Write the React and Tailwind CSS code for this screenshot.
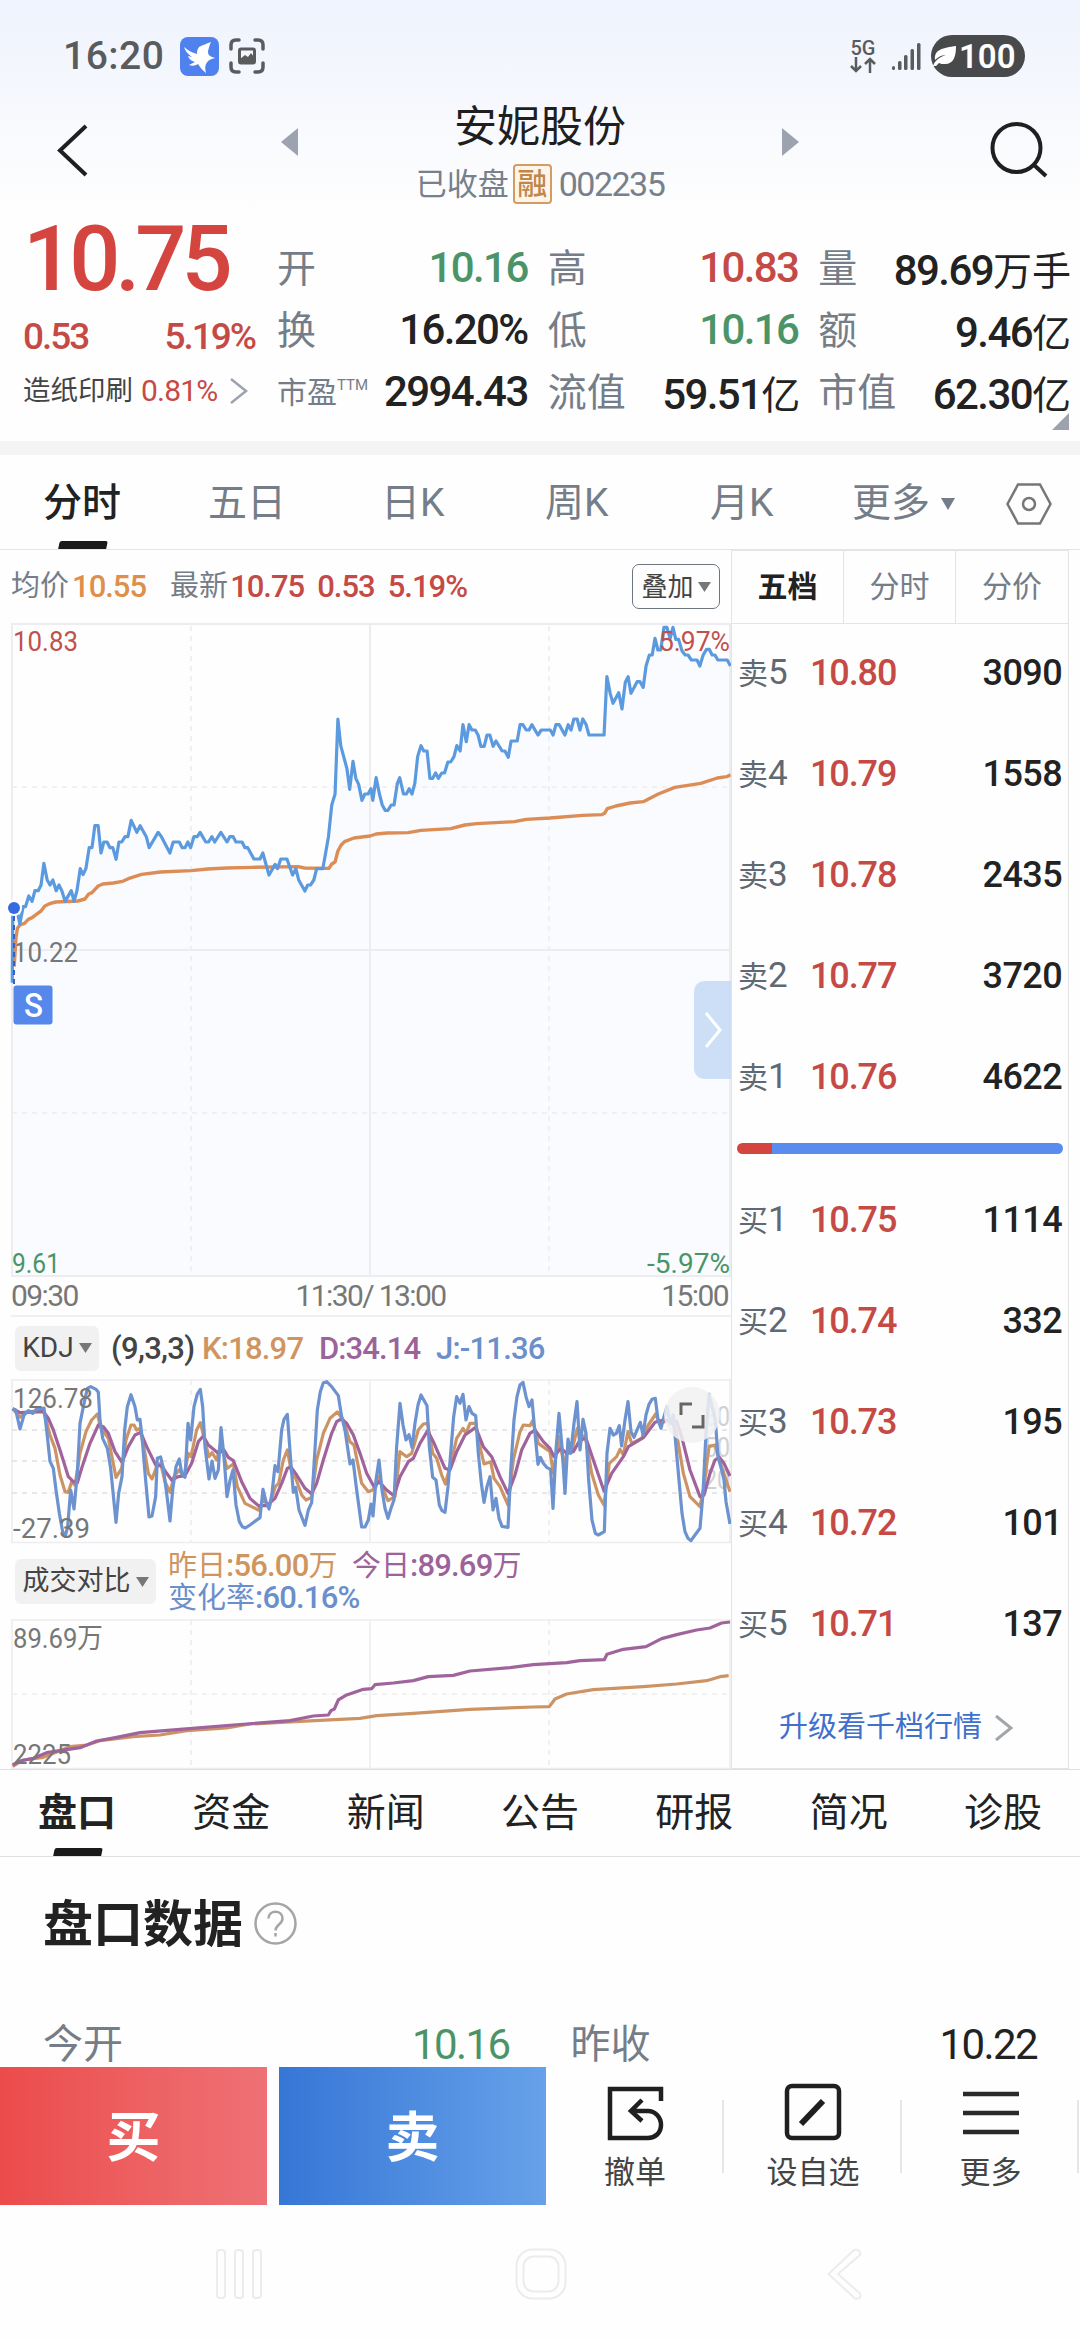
import React from "react";

const RED = "text-[#c54a45]";
const GREEN = "text-[#4b9468]";

const stats = [
  [
    { label: "开", value: "10.16", tone: GREEN },
    { label: "换", value: "16.20%", tone: "text-[#222]" },
    { label: "市盈", sup: "TTM", value: "2994.43", tone: "text-[#222]" },
  ],
  [
    { label: "高", value: "10.83", tone: RED },
    { label: "低", value: "10.16", tone: GREEN },
    { label: "流值", value: "59.51", unit: "亿", tone: "text-[#222]" },
  ],
  [
    { label: "量", value: "89.69", unit: "万手", tone: "text-[#222]" },
    { label: "额", value: "9.46", unit: "亿", tone: "text-[#222]" },
    { label: "市值", value: "62.30", unit: "亿", tone: "text-[#222]" },
  ],
];

const asks = [
  ["5", "10.80", "3090"],
  ["4", "10.79", "1558"],
  ["3", "10.78", "2435"],
  ["2", "10.77", "3720"],
  ["1", "10.76", "4622"],
];
const bids = [
  ["1", "10.75", "1114"],
  ["2", "10.74", "332"],
  ["3", "10.73", "195"],
  ["4", "10.72", "101"],
  ["5", "10.71", "137"],
];

/* Price and average series, in plot units. */
const price =
  "26,1298 27,1080 36,1080 42,1122 49,1070 54,1070 61,1038 68,1054 74,1022 81,1022 87,1005 93,940 100,990 106,1005 112,990 119,1022 125,1005 131,1022 138,1054 151,1022 157,1054 163,1022 170,956 176,974 182,956 189,893 195,893 201,827 208,827 214,909 220,876 227,876 233,893 239,893 246,928 252,876 258,876 265,860 271,860 278,811 290,847 297,827 310,860 316,893 323,876 335,847 342,860 360,909 367,876 380,876 386,893 392,893 398,876 404,893 411,860 418,860 424,847 436,876 442,876 449,860 455,876 468,847 481,876 487,860 494,860 500,876 513,876 519,893 525,893 538,927 551,927 557,909 564,945 570,975 583,943 588,956 595,927 608,927 620,975 627,956 633,990 646,1023 652,1005 658,1005 665,990 671,956 684,956 690,909 696,860 703,765 710,732 716,507 722,587 735,655 741,718 748,634 754,685 760,703 767,751 773,732 780,732 786,716 790,751 797,683 804,732 810,765 816,781 822,781 829,765 835,765 842,700 847,683 855,732 861,732 867,716 873,732 879,700 885,620 892,587 898,603 905,603 911,685 917,685 923,669 929,685 936,669 942,669 949,636 955,636 962,620 968,587 975,603 981,524 988,575 994,524 1000,540 1007,540 1013,555 1019,589 1026,589 1032,555 1038,555 1045,589 1051,573 1064,603 1070,603 1077,622 1083,573 1096,573 1102,524 1108,524 1115,540 1121,540 1127,524 1140,555 1147,540 1166,540 1172,555 1178,524 1185,524 1197,555 1204,524 1210,540 1216,507 1223,507 1229,540 1235,507 1242,524 1248,555 1280,555 1286,380 1293,430 1299,460 1311,428 1318,477 1325,397 1331,380 1337,430 1344,412 1350,395 1356,395 1363,412 1369,348 1376,315 1382,315 1388,265 1394,300 1400,300 1407,232 1413,232 1420,265 1426,232 1432,268 1438,268 1445,302 1452,315 1458,315 1465,330 1477,330 1483,348 1490,315 1497,298 1503,298 1509,315 1515,315 1521,330 1541,330 1548,348";
const average =
  "30,1250 34,1160 37,1135 42,1125 52,1120 60,1108 68,1103 80,1090 87,1083 95,1068 105,1061 118,1056 165,1053 180,1047 188,1032 195,1028 208,1008 218,1002 240,999 260,994 272,986 300,973 340,966 405,962 440,957 480,954 535,952 632,950 645,954 697,955 703,942 710,936 716,903 723,885 730,875 750,864 784,858 797,852 820,849 865,848 892,841 955,836 985,825 1010,821 1090,815 1115,808 1165,804 1235,796 1275,794 1281,790 1287,776 1305,768 1335,759 1363,755 1395,732 1430,712 1485,700 1520,684 1540,680 1548,674";

/* KDJ series, three plot units per pixel. */
const lineJ =
  "38,446 47,450 60,507 72,465 85,452 98,460 108,449 132,444 140,510 150,604 160,625 168,690 178,760 188,815 196,828 203,800 212,690 222,747 232,640 240,490 250,440 262,385 272,380 288,388 295,397 300,480 308,535 322,565 332,625 348,787 356,700 366,650 374,510 382,440 393,404 405,440 412,480 420,478 426,530 436,650 447,771 456,768 467,710 472,595 482,591 490,625 500,700 510,783 518,690 528,620 538,597 545,640 555,652 564,490 572,540 582,440 592,402 601,388 608,440 615,560 627,657 636,603 645,655 655,630 663,503 672,590 681,710 690,662 699,630 708,735 718,785 727,800 736,804 750,795 780,773 789,688 798,725 807,747 816,700 825,617 834,635 845,510 852,478 862,463 872,600 880,697 887,682 897,750 915,796 925,750 935,728 943,600 952,450 961,395 970,368 980,365 995,380 1015,407 1025,470 1035,510 1050,612 1059,600 1070,690 1085,801 1095,801 1105,780 1113,732 1119,768 1128,660 1137,600 1146,690 1155,745 1164,775 1173,745 1182,720 1190,560 1200,430 1209,495 1218,540 1227,524 1236,562 1245,490 1254,435 1263,405 1281,437 1288,560 1298,652 1308,660 1318,735 1326,752 1335,757 1344,680 1352,580 1361,470 1370,410 1380,430 1389,403 1398,480 1407,440 1416,460 1427,467 1435,580 1444,670 1452,727 1461,680 1470,650 1479,750 1488,715 1497,775 1506,799 1524,802 1533,620 1542,480 1551,410 1560,375 1569,367 1578,410 1587,440 1596,420 1605,520 1614,613 1621,592 1630,610 1640,622 1652,628 1659,745 1668,570 1677,460 1686,560 1695,700 1704,537 1712,580 1722,490 1731,425 1740,570 1749,478 1758,520 1766,660 1776,780 1786,820 1795,825 1813,815 1821,580 1830,505 1840,525 1849,520 1858,497 1865,558 1875,480 1884,425 1893,515 1902,532 1912,508 1921,487 1929,525 1938,465 1947,433 1956,418 1966,415 1974,480 1983,505 1992,470 2001,440 2010,490 2020,465 2028,560 2037,660 2046,760 2055,815 2064,835 2073,842 2085,825 2100,805 2109,700 2118,520 2127,403 2136,440 2146,480 2154,590 2165,630 2172,660 2178,725 2190,792";
const lineD =
  "38,446 60,458 130,455 145,475 160,510 180,570 205,650 220,665 232,668 245,625 270,550 295,495 310,500 325,520 345,575 366,607 385,560 405,525 422,517 440,560 468,617 485,617 500,640 515,660 535,650 555,647 575,610 595,545 610,528 625,555 655,580 672,570 685,592 700,602 725,665 750,715 775,737 800,737 825,715 845,670 862,625 872,620 890,645 915,685 935,702 950,670 970,600 995,520 1010,485 1024,477 1040,490 1060,525 1080,580 1100,640 1122,680 1137,665 1160,690 1182,707 1200,650 1225,605 1240,595 1260,550 1283,512 1300,545 1335,625 1350,630 1370,575 1395,525 1427,502 1450,560 1475,590 1500,650 1524,700 1545,645 1565,570 1590,520 1605,510 1630,545 1650,565 1662,590 1682,565 1700,580 1720,575 1740,540 1758,535 1780,600 1812,693 1835,640 1870,590 1885,560 1930,533 1965,487 1990,480 2030,485 2045,530 2070,630 2100,710 2112,705 2130,640 2145,600 2158,592 2172,610 2190,648";
const lineK =
  "38,446 60,472 75,458 130,450 150,525 165,565 180,645 195,695 205,697 215,665 225,675 240,580 258,515 275,480 292,462 303,505 325,535 348,652 365,625 378,540 393,495 402,495 410,510 420,505 435,580 445,640 456,657 470,620 482,610 495,665 510,697 522,650 537,630 552,650 565,580 573,590 590,510 601,488 615,545 627,590 636,578 650,600 663,550 681,625 700,612 712,680 735,730 775,750 790,720 808,740 826,680 836,670 850,600 862,570 875,640 887,655 905,705 918,720 935,712 950,600 970,520 990,475 1012,456 1030,480 1050,545 1062,555 1085,670 1105,695 1118,690 1128,680 1137,650 1150,690 1164,722 1185,710 1200,575 1220,590 1235,580 1255,510 1270,492 1283,490 1298,580 1310,595 1325,645 1336,672 1350,620 1370,535 1389,505 1398,520 1410,490 1427,490 1440,560 1452,612 1472,605 1482,655 1500,680 1524,735 1540,600 1560,515 1570,495 1590,497 1598,482 1615,550 1650,575 1660,640 1677,530 1692,615 1705,560 1715,575 1732,505 1742,545 1755,525 1775,640 1795,705 1812,735 1828,610 1850,590 1860,568 1870,585 1884,515 1895,550 1925,535 1945,495 1967,462 1980,490 2010,480 2028,510 2050,640 2070,710 2100,740 2112,680 2127,560 2145,555 2165,620 2190,695";
const today =
  "38,1515 60,1503 100,1495 140,1478 240,1463 290,1443 350,1432 420,1418 540,1408 700,1395 870,1382 940,1368 985,1365 993,1352 1003,1347 1015,1320 1040,1305 1090,1288 1115,1286 1125,1274 1180,1269 1240,1262 1285,1250 1360,1246 1410,1233 1530,1223 1600,1214 1700,1208 1740,1202 1813,1199 1821,1183 1870,1168 1938,1160 1985,1136 2030,1124 2090,1110 2130,1104 2165,1089 2190,1086";
const yesterday =
  "38,1519 70,1500 130,1492 210,1460 260,1455 300,1442 400,1430 480,1425 560,1412 680,1404 750,1392 900,1384 1080,1375 1130,1367 1240,1360 1410,1348 1600,1341 1648,1340 1665,1317 1700,1302 1780,1289 1930,1280 2030,1272 2120,1262 2160,1250 2186,1247";

function Line({ points, color, width = 3.2 }) {
  return (
    <polyline
      points={points}
      fill="none"
      stroke={color}
      strokeWidth={width}
      strokeLinejoin="round"
      vectorEffect="non-scaling-stroke"
    />
  );
}

function Label({ x, y, w, fill = "#777", end, children }) {
  return (
    <text x={x} y={y} fill={fill} fontSize="28.5" textAnchor={end ? "end" : "start"} textLength={w} lengthAdjust="spacingAndGlyphs">
      {children}
    </text>
  );
}

function Caret({ className = "" }) {
  return (
    <svg className={className} width="13" height="10" viewBox="0 0 13 10">
      <path d="M0 0h13L6.500 10z" fill="#777" />
    </svg>
  );
}

function StatusBar() {
  return (
    <div className="flex h-[90px] items-center pl-[63px] pr-[55px] pt-[22px] text-[#5a5b5d]">
      <span className="w-[117px] text-[39px] font-medium leading-none tracking-[0.5px]">16:20</span>
      <svg width="39" height="39" viewBox="0 0 39 39">
        <rect width="39" height="39" rx="8" fill="#4f82ee" />
        <path d="M4 10c5 4 9 6 13 7 0-4 1-7 4-8 3-1 4-2 10-4-2 4-2 6-3 9 0 4 1 5 7 7-4 1-7 2-9 6-1 3-1 5 0 9-4-3-6-6-8-9-3 2-6 2-9 1l6-3c-4-1-6-3-7-6l4 1c-4-3-7-6-8-10z" fill="#fff" />
      </svg>
      <svg className="ml-[10px]" width="36" height="36" viewBox="0 0 36 36" fill="none" stroke="#5a5b5d" strokeWidth="3.500" strokeLinecap="round">
        <path d="M2 11V7q0-5 5-5h3M26 2h3q5 0 5 5v4M34 25v4q0 5-5 5h-3M10 34H7q-5 0-5-5v-4" />
        <rect x="10.500" y="11" width="15" height="14" rx="1.500" strokeWidth="3" />
        <path d="M11 21l5-4 3 2 3-4 3 4v5H11z" fill="#5a5b5d" stroke="none" />
      </svg>
      <div className="ml-auto flex items-center">
        <div className="flex w-[28px] flex-col items-center">
          <span className="text-[20px] font-medium leading-[18px]">5G</span>
          <svg width="26" height="16" viewBox="0 0 26 16" fill="none" stroke="#5a5b5d" strokeWidth="2.500">
            <path d="M6 0v14M1 9l5 5 5-5M20 16V2M15 7l5-5 5 5" />
          </svg>
        </div>
        <svg className="ml-[15px]" width="29" height="29" viewBox="0 0 29 29" fill="#5a5b5d">
          <rect x="0" y="24" width="3" height="4" rx="1.500" />
          <rect x="6" y="19" width="3.500" height="9" rx="1.500" />
          <rect x="12" y="13" width="3.500" height="15" rx="1.500" />
          <rect x="18.500" y="7" width="3.500" height="21" rx="1.500" />
          <rect x="25" y="1" width="3.500" height="27" rx="1.500" />
        </svg>
        <div className="ml-[10px] flex h-[42px] w-[94px] items-center rounded-full bg-[#48494b] pl-[2px] text-white">
          <svg width="24" height="22" viewBox="0 0 24 22">
            <path d="M23 1c0 10-2 18-11 18-3 0-4 0-6-1l-3 3H0c2-6 7-9 13-11C8 10 4 13 2 15 1 4 10 3 23 1z" fill="#fff" />
          </svg>
          <span className="ml-[2px] text-[33px] font-semibold leading-none">100</span>
        </div>
      </div>
    </div>
  );
}

function Header() {
  return (
    <div className="flex h-[122px] items-start text-[#1f1f1f]">
      <svg className="ml-[57px] mt-[34px]" width="31" height="53" viewBox="0 0 31 53" fill="none" stroke="#1f1f1f" strokeWidth="4">
        <path d="M29 2L3 26.500 29 51" />
      </svg>
      <svg className="ml-[193px] mt-[38px]" width="17" height="28" viewBox="0 0 17 28">
        <path d="M17 0v28L0 14z" fill="#9ca3ae" />
      </svg>
      <div className="flex flex-1 flex-col items-center">
        <div className="mt-[15px] text-[43px] leading-[44px]">安妮股份</div>
        <div className="mt-[14px] flex h-[42px] items-center text-[31px] leading-none text-[#77808b]">
          <span>已收盘</span>
          <span className="ml-[4px] flex h-[40px] w-[39px] items-center justify-center rounded-[4px] border-2 border-[#d39c62] bg-[#fdf5ea] text-[30px] font-medium text-[#c0874a]">融</span>
          <span className="ml-[7px] text-[34px] tracking-[-1.5px]">002235</span>
        </div>
      </div>
      <svg className="mt-[38px]" width="17" height="28" viewBox="0 0 17 28">
        <path d="M0 0v28l17-14z" fill="#9ca3ae" />
      </svg>
      <svg className="ml-[191px] mr-[32px] mt-[32px]" width="58" height="56" viewBox="0 0 58 56" fill="none" stroke="#1f1f1f" strokeWidth="4">
        <circle cx="26.500" cy="26" r="24" />
        <path d="M44 43l12 11" />
      </svg>
    </div>
  );
}

function Stat({ item }) {
  return (
    <div className="flex h-[62px] items-center justify-between">
      {item.sup ? (
        <span className="flex text-[30px] leading-none text-[#747d88]">
          {item.label}
          <span className="text-[15px] leading-none">{item.sup}</span>
        </span>
      ) : (
        <span className="text-[39px] leading-none text-[#747d88]">{item.label}</span>
      )}
      <span className={`text-[42px] font-medium leading-none tracking-[-1.6px] ${item.tone} ${item.unit ? "-mr-[2px] pt-[3px]" : "pb-[3px]"}`}>
        {item.value}
        {item.unit && <span className="text-[39px] font-normal tracking-normal">{item.unit}</span>}
      </span>
    </div>
  );
}

function Quote() {
  return (
    <div className="relative flex h-[229px]">
      <div className="w-[277px] pl-[23px]">
        <div className="mt-[3px] text-[90px] font-medium leading-[90px] tracking-[-5px] text-[#d5453f]">10.75</div>
        <div className={`mt-[13px] flex h-[36px] items-center justify-between pr-[22px] text-[37px] font-medium leading-none tracking-[-2px] ${RED}`}>
          <span>0.53</span>
          <span>5.19%</span>
        </div>
        <div className="mt-[19px] flex h-[36px] items-center text-[27.5px] leading-none text-[#444]">
          <span>造纸印刷</span>
          <span className={`ml-[8px] text-[30px] tracking-[-0.8px] ${RED}`}>0.81%</span>
          <svg className="ml-[13px]" width="18" height="26" viewBox="0 0 18 26" fill="none" stroke="#9ca3ae" strokeWidth="2.500">
            <path d="M1 1l15 12L1 25" />
          </svg>
        </div>
      </div>
      <div className="grid w-[792px] grid-cols-3 gap-x-[20px] pt-[26px]">
        {stats.map((col, i) => (
          <div key={i}>
            {col.map((item) => (
              <Stat key={item.label} item={item} />
            ))}
          </div>
        ))}
      </div>
      <svg className="absolute right-[11px] top-[201px]" width="17" height="17" viewBox="0 0 17 17">
        <path d="M17 0v17H0z" fill="#9ca3ae" />
      </svg>
    </div>
  );
}

function PeriodTabs() {
  return (
    <div className="relative flex h-[95px] items-center border-b border-[#e6e6e6] pt-[3px] text-[39px] leading-none text-[#747d88]">
      <span className="w-[166px] pl-[43px] font-medium text-[#222]">分时</span>
      <span className="w-[165px] pl-[42px]">五日</span>
      <span className="w-[165px] pl-[50px]">日K</span>
      <span className="w-[165px] pl-[49px]">周K</span>
      <span className="w-[165px] pl-[49px]">月K</span>
      <span className="flex items-center pl-[26px]">
        更多
        <svg className="ml-[11px]" width="14" height="12" viewBox="0 0 14 12">
          <path d="M0 0h14L7 12z" fill="#747d88" />
        </svg>
      </span>
      <svg className="ml-auto mr-[28px]" width="46" height="42" viewBox="0 0 46 42" fill="none" stroke="#777" strokeWidth="2.500">
        <path d="M12 1.500h22L44.500 21 34 40.500H12L1.500 21z" />
        <circle cx="23" cy="21" r="6" />
      </svg>
      <span className="absolute bottom-0 left-[59px] h-[8px] w-[48px] -skew-x-12 rounded-t-[2px] bg-[#1a1a1a]" />
    </div>
  );
}

function PriceChart() {
  return (
    <svg className="ml-[11px] block overflow-visible" width="720" height="654" viewBox="11 623 720 654">
      <g transform="translate(0 550) scale(0.47192 0.33333)">
        <polygon points={`${price} 1550,2182 24,2182`} fill="#f9fbff" />
      </g>
      <g stroke="#ededf0" strokeWidth="2" fill="none">
        <path d="M11 624H731M12 623V1277M370 624V1276M730 624V1276M12 950H731M11 1276H731" />
        <path d="M191 626V1276M549 626V1276M12 787H731M12 1113H731" strokeDasharray="5 5" strokeWidth="1.600" />
      </g>
      <Label x="13" y="962" w="65">10.22</Label>
      <Label x="13" y="651" w="65" fill="#c0524e">10.83</Label>
      <Label x="12" y="1273" w="48" fill="#4b9468">9.61</Label>
      <Label x="730" y="1273" w="83" end fill="#4b9468">-5.97%</Label>
      <g transform="translate(0 550) scale(0.47192 0.33333)">
        <Line points={average} color="#db8d55" width={3.4} />
        <Line points={price} color="#5c9ae0" width={3.2} />
      </g>
      <Label x="730" y="651" w="71" end fill="#c0524e">5.97%</Label>
      <path d="M14 916V984" stroke="#3a5fc0" strokeWidth="2" strokeDasharray="5 4" />
      <circle cx="14" cy="908" r="8" fill="#fff" />
      <circle cx="14" cy="908" r="6" fill="#356be0" />
      <rect x="13.500" y="985.500" width="39" height="39" rx="3" fill="#5588ea" />
      <text x="33.500" y="1017" fill="#fff" fontSize="33" fontWeight="500" textAnchor="middle" textLength="19" lengthAdjust="spacingAndGlyphs">S</text>
      <path d="M731 981H706q-12 0-12 12v74q0 12 12 12H731z" fill="#c7dcf5" fillOpacity="0.9" />
      <path d="M706 1013l14 17-14 17" fill="none" stroke="#fff" strokeWidth="3" />
    </svg>
  );
}

function KdjChart() {
  return (
    <svg className="ml-[11px] block overflow-visible" width="720" height="165" viewBox="11 1379 720 165">
      <g stroke="#ededf0" strokeWidth="2" fill="none">
        <path d="M11 1380H731M12 1380V1543M370 1380V1543M730 1380V1543M11 1542.500H731" strokeWidth="1.600" />
        <path d="M191 1380V1542M549 1380V1542" strokeDasharray="5 5" strokeWidth="1.600" />
        <path d="M12 1430H731M12 1461H731M12 1493H731" stroke="#e0e0e3" strokeDasharray="5 5" strokeWidth="1.600" />
      </g>
      <Label x="730" y="1426" w="26" end fill="#d0d0d4">80</Label>
      <Label x="730" y="1457" w="26" end fill="#d0d0d4">50</Label>
      <Label x="730" y="1489" w="26" end fill="#d0d0d4">20</Label>
      <g transform="translate(0 1260) scale(0.33333)">
        <Line points={lineK} color="#cc9464" />
        <Line points={lineD} color="#a0639c" />
        <Line points={lineJ} color="#6c92cf" />
      </g>
      <Label x="13" y="1408" w="80">126.78</Label>
      <Label x="13" y="1538" w="77">-27.39</Label>
      <circle cx="692" cy="1415" r="28" fill="#f1f1f2" fillOpacity="0.86" />
      <path d="M681 1415v-11h11M703 1415v12h-11" fill="none" stroke="#666" strokeWidth="3" />
    </svg>
  );
}

function VolumeChart() {
  return (
    <svg className="ml-[11px] block overflow-visible" width="720" height="150" viewBox="11 1619 720 150">
      <g stroke="#ededf0" strokeWidth="1.600" fill="none">
        <path d="M11 1620H731M12 1620V1769M370 1620V1769M730 1620V1769M11 1768.500H731" />
        <path d="M191 1620V1768M549 1620V1768M12 1694H731" strokeDasharray="5 5" />
      </g>
      <g transform="translate(0 1260) scale(0.33333)">
        <Line points={yesterday} color="#cc9464" />
        <Line points={today} color="#a0639c" />
      </g>
      <Label x="13" y="1648" w="90">89.69万</Label>
      <Label x="13" y="1764" w="58">2225</Label>
    </svg>
  );
}

function ChartColumn() {
  return (
    <div className="h-[1219px] w-[731px]">
      <div className="flex h-[73px] items-center pl-[11px] pr-[11px] text-[29px] leading-none text-[#747d88]">
        <span>均价</span>
        <span className="ml-[3px] text-[31px] font-medium tracking-[-1px] text-[#de8f4b]">10.55</span>
        <span className="ml-[24px]">最新</span>
        <span className={`ml-[2px] flex gap-[13px] text-[31px] font-medium tracking-[-1px] ${RED}`}>
          <span>10.75</span>
          <span>0.53</span>
          <span>5.19%</span>
        </span>
        <span className="ml-auto flex h-[45px] w-[88px] items-center justify-center gap-[4px] rounded-[7px] border border-[#6e757d] text-[26px] text-[#444]">
          叠加
          <Caret />
        </span>
      </div>
      <PriceChart />
      <div className="ml-[11px] flex h-[40px] items-center justify-between border-b-2 border-[#f0f0f0] pb-[1px] pr-[3px] text-[30px] leading-none tracking-[-1.6px] text-[#777]">
        <span>09:30</span>
        <span className="pl-[2px]">11:30/ 13:00</span>
        <span>15:00</span>
      </div>
      <div className="flex h-[62px] items-center pl-[15px] text-[31px] font-medium leading-none">
        <span className="flex h-[45px] w-[84px] items-center justify-center gap-[5px] rounded-[6px] bg-[#f1f1f1] text-[28px] font-normal text-[#444]">
          KDJ
          <Caret />
        </span>
        <span className="ml-[12px] w-[91px] tracking-[-0.7px] text-[#444]">(9,3,3)</span>
        <span className="w-[117px] tracking-[-0.8px] text-[#cf9560]">K:18.97</span>
        <span className="w-[117px] tracking-[-0.9px] text-[#9c639a]">D:34.14</span>
        <span className="tracking-[-0.8px] text-[#6a8fcb]">J:-11.36</span>
      </div>
      <KdjChart />
      <div className="flex h-[75px] items-center pl-[15px] leading-none">
        <span className="flex h-[45px] w-[141px] items-center justify-center gap-[5px] rounded-[6px] bg-[#f1f1f1] text-[27px] text-[#444]">
          成交对比
          <Caret />
        </span>
        <div className="ml-[12px] flex flex-col text-[29px] leading-[31px]">
          <div className="flex">
            <span className="w-[184px] text-[#cf9560]">
              昨日<b className="text-[31px] font-medium tracking-[-0.8px]">:56.00</b>万
            </span>
            <span className="text-[#9c639a]">
              今日<b className="text-[31px] font-medium tracking-[-0.8px]">:89.69</b>万
            </span>
          </div>
          <span className="text-[#6a8fcb]">
            变化率<b className="text-[31px] font-medium tracking-[-0.8px]">:60.16%</b>
          </span>
        </div>
      </div>
      <VolumeChart />
    </div>
  );
}

function Level({ side, row }) {
  return (
    <div className="flex h-[101px] items-center leading-none">
      <span className="w-[72px] text-[30px] text-[#5f6973]">
        {side}
        <span className="text-[35px]">{row[0]}</span>
      </span>
      <span className={`text-[36px] font-medium tracking-[-1.1px] ${RED}`}>{row[1]}</span>
      <span className="ml-auto text-[36px] font-medium tracking-[-0.6px] text-[#222]">{row[2]}</span>
    </div>
  );
}

function OrderBook() {
  return (
    <div className="flex h-[1219px] w-[338px] flex-col border border-[#e4e4e4]">
      <div className="grid h-[73px] grid-cols-3 items-stretch border-b border-[#e4e4e4] text-[30px] leading-none text-[#747d88]">
        <span className="flex items-center justify-center border-r border-[#e4e4e4] font-bold text-[#222]">五档</span>
        <span className="flex items-center justify-center border-r border-[#e4e4e4]">分时</span>
        <span className="flex items-center justify-center">分价</span>
      </div>
      <div className="flex flex-col pl-[6px] pr-[6px]">
        <div className="-mt-[2px]">
          {asks.map((r) => (
            <Level key={r[0]} side="卖" row={r} />
          ))}
        </div>
        <div className="-ml-[1px] -mr-[1px] mt-[16px] flex h-[11px] overflow-hidden rounded-full">
          <span className="w-[35px] bg-[#d5453f]" />
          <span className="flex-1 bg-[#5a8cf0]" />
        </div>
        <div className="mt-[15px]">
          {bids.map((r) => (
            <Level key={r[0]} side="买" row={r} />
          ))}
        </div>
      </div>
      <div className="ml-[47px] mt-[39px] flex items-center text-[29px] leading-none text-[#3f70cb]">
        升级看千档行情
        <svg className="ml-[13px]" width="18" height="28" viewBox="0 0 18 28" fill="none" stroke="#a0a6ad" strokeWidth="3">
          <path d="M1 2l15 12L1 26" />
        </svg>
      </div>
    </div>
  );
}

function InfoTabs() {
  return (
    <div className="relative flex h-[88px] items-center justify-between border-y border-[#e0e0e0] pl-[38px] pr-[38px] pt-[1px] text-[39px] leading-none text-[#222]">
      <span className="font-bold">盘口</span>
      <span>资金</span>
      <span>新闻</span>
      <span>公告</span>
      <span>研报</span>
      <span>简况</span>
      <span>诊股</span>
      <span className="absolute bottom-0 left-[54px] h-[8px] w-[48px] -skew-x-12 rounded-t-[2px] bg-[#1a1a1a]" />
    </div>
  );
}

function BookData() {
  return (
    <div className="h-[210px] overflow-hidden pl-[43px]">
      <div className="mt-[40px] flex h-[56px] items-center">
        <span className="text-[50px] font-bold leading-none text-[#222]">盘口数据</span>
        <svg className="-mt-[3px] ml-[11px]" width="43" height="43" viewBox="0 0 43 43" fill="none" stroke="#a5a5a5" strokeWidth="2.500">
          <circle cx="21.500" cy="21.500" r="20" />
          <path d="M14.500 16.500c0-9 14-9 14 0 0 6-7 6-7 12M21.500 31v3.500" />
        </svg>
      </div>
      <div className="mt-[68px] flex h-[48px] items-center text-[40px] leading-none text-[#747d88]">
        <span>今开</span>
        <span className={`ml-auto text-[42px] tracking-[-1.6px] ${GREEN}`}>10.16</span>
        <span className="ml-[61px]">昨收</span>
        <span className="ml-auto pr-[43px] text-[42px] tracking-[-1.6px] text-[#222]">10.22</span>
      </div>
    </div>
  );
}

function ActionBar() {
  return (
    <div className="flex h-[138px] text-[#444]">
      <div className="flex w-[267px] items-center justify-center bg-linear-to-r from-[#ec4b4b] to-[#ee7175] pt-[5px] text-[54px] font-bold leading-none text-white">
        买
      </div>
      <div className="ml-[12px] flex w-[267px] items-center justify-center bg-linear-to-r from-[#3676d6] to-[#66a1e9] pt-[5px] text-[54px] font-bold leading-none text-white">
        卖
      </div>
      <div className="flex w-[176px] flex-col items-center text-[31px] leading-none">
        <svg className="ml-[2px] mt-[18px]" width="58" height="58" viewBox="0 0 58 58" fill="none" stroke="#1f1f1f" strokeWidth="4.500">
          <path d="M55 16V4H4v49h38c7 0 13-5 13-13s-6-14-13-14H26" />
          <path d="M36 15L25 26l11 10" />
        </svg>
        <span className="ml-[2px] mt-[14px]">撤单</span>
      </div>
      <div className="mt-[33px] h-[73px] w-[2px] bg-[#e6e6e8]" />
      <div className="flex w-[176px] flex-col items-center text-[31px] leading-none">
        <svg className="ml-[2px] mt-[16px]" width="58" height="58" viewBox="0 0 58 58" fill="none" stroke="#1f1f1f">
          <rect x="3" y="3" width="52" height="52" rx="5" strokeWidth="4.500" />
          <path d="M17 41l22-23" strokeWidth="6" />
        </svg>
        <span className="ml-[2px] mt-[16px]">设自选</span>
      </div>
      <div className="mt-[33px] h-[73px] w-[2px] bg-[#e6e6e8]" />
      <div className="flex w-[175px] flex-col items-center text-[31px] leading-none">
        <svg className="ml-[2px] mt-[18px]" width="56" height="56" viewBox="0 0 56 56" stroke="#2a2a2a" strokeWidth="4.500">
          <path d="M0 9h56M0 28h56M0 47h56" />
        </svg>
        <span className="ml-[2px] mt-[16px]">更多</span>
      </div>
      <div className="mt-[33px] h-[73px] w-[2px] bg-[#e6e6e8]" />
    </div>
  );
}

function SystemNav() {
  return (
    <div className="flex h-[135px] items-start pt-[43px]">
      <svg className="ml-[216px]" width="46" height="52" viewBox="0 0 46 52" fill="none" stroke="#ececec" strokeWidth="2">
        <rect x="1" y="2" width="8" height="48" rx="3" />
        <rect x="19" y="2" width="8" height="48" rx="3" />
        <rect x="37" y="2" width="8" height="48" rx="3" />
      </svg>
      <svg className="ml-[253px]" width="52" height="52" viewBox="0 0 52 52" fill="none" stroke="#ececec" strokeWidth="2">
        <rect x="1.500" y="1.500" width="49" height="49" rx="16" />
        <rect x="8.500" y="8.500" width="35" height="35" rx="10" />
      </svg>
      <svg className="ml-[260px]" width="35" height="52" viewBox="0 0 35 52" fill="none" stroke="#ececec" strokeWidth="2" strokeLinejoin="round">
        <path d="M27 2L1.500 26 28 50.500q7 1 5-5L11 26 33 7q1-6-6-5z" />
      </svg>
    </div>
  );
}

export default function App() {
  return (
    <div className="h-[2340px] w-[1080px] overflow-hidden bg-[#fefefe] font-['Roboto','Noto_Sans_CJK_SC',sans-serif]">
      <div className="bg-linear-to-b from-[#eff3fd] to-[#fefefe]">
        <StatusBar />
        <Header />
      </div>
      <Quote />
      <div className="h-[14px] bg-[#f4f4f4]" />
      <PeriodTabs />
      <div className="flex h-[1219px]">
        <ChartColumn />
        <OrderBook />
      </div>
      <InfoTabs />
      <BookData />
      <ActionBar />
      <SystemNav />
    </div>
  );
}
